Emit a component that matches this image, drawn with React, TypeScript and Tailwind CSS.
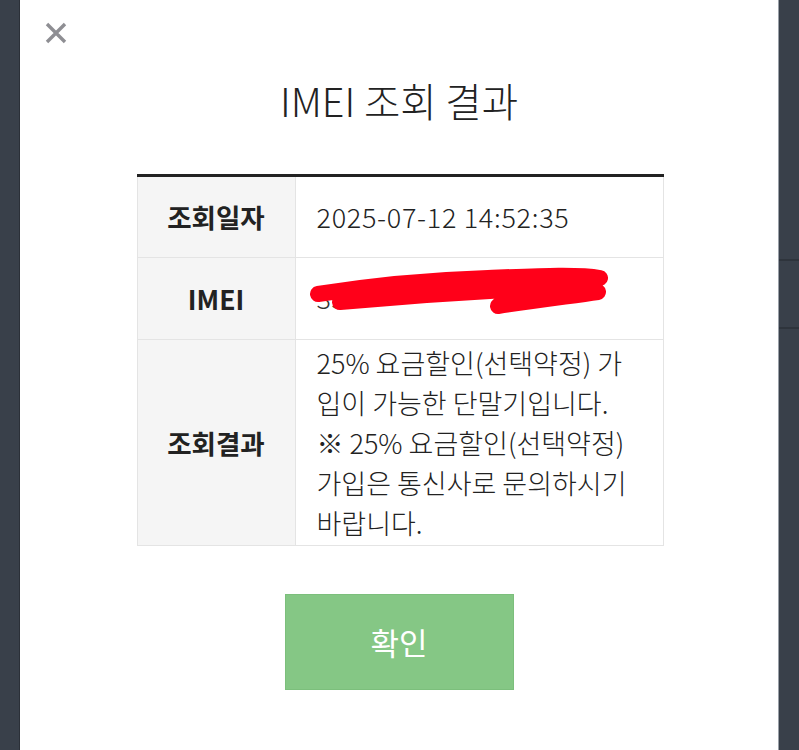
const font = { fontFamily: '"Noto Sans CJK KR", "Noto Sans", sans-serif' };

function InfoRow({ label, children, h }: { label: string; children: React.ReactNode; h: string }) {
  return (
    <div className={`flex border-b border-[#e4e4e4] ${h}`}>
      <div className="flex w-[159px] shrink-0 items-center justify-center border-l border-r border-[#e4e4e4] bg-[#f5f5f5] text-[26.5px] font-bold text-[#222]">
        {label}
      </div>
      <div className="relative flex flex-1 items-center border-r border-[#e4e4e4] pl-[21px] text-[27px] font-light text-[#222]">
        {children}
      </div>
    </div>
  );
}

export default function App() {
  return (
    <div className="flex h-[750px] w-[799px] bg-[#39404a]" style={font}>
      <div className="w-[20px] shrink-0 border-r border-[#2b3038]" />
      <div className="flex flex-1 flex-col items-center bg-white pt-[22px]">
        <div className="flex w-full pl-[25px]">
          <button className="flex h-[22px] w-[22px] items-center justify-center">
            <svg width="22" height="22" viewBox="0 0 22 22">
              <path d="M2 2 L20 20 M20 2 L2 20" stroke="#8e8e93" strokeWidth="3.4" strokeLinecap="butt" />
            </svg>
          </button>
        </div>
        <h2 className="mt-[29px] text-[39.5px] leading-[54px] font-light text-[#222]">IMEI 조회 결과</h2>

        <div className="ml-[2px] mt-[47px] w-[527px] border-t-[3px] border-[#222]">
          <InfoRow label="조회일자" h="h-[81px]">
            <span className="tracking-[0.7px]">2025-07-12 14:52:35</span>
          </InfoRow>
          <InfoRow label="IMEI" h="h-[82px]">
            <span className="tracking-wide text-[#333]">35*************0</span>
            <svg className="absolute left-[12px] top-[6px]" width="300" height="52" viewBox="0 0 300 52">
              <path
                d="M10 30 C60 22 120 16 180 14 C230 12 270 10 292 14 M32 38 C100 32 180 26 284 22 M190 42 C230 36 262 32 290 28"
                fill="none"
                stroke="#ff0019"
                strokeWidth="16"
                strokeLinecap="round"
              />
            </svg>
          </InfoRow>
          <InfoRow label="조회결과" h="h-[206px]">
            <div className="leading-[40px]">
              <div>25% 요금할인(선택약정) 가</div>
              <div>입이 가능한 단말기입니다.</div>
              <div>※ 25% 요금할인(선택약정)</div>
              <div>가입은 통신사로 문의하시기</div>
              <div>바랍니다.</div>
            </div>
          </InfoRow>
        </div>

        <button className="mt-[48px] h-[96px] w-[229px] border border-[#7cbf7c] bg-[#85c785] text-[31px] text-white">
          확인
        </button>
      </div>
      <div className="flex w-[21px] shrink-0 flex-col border-l border-[#9aa0a8]">
        <div className="h-[259px]" />
        <div className="h-[70px] border-y-2 border-[#2e343c]" />
      </div>
    </div>
  );
}
